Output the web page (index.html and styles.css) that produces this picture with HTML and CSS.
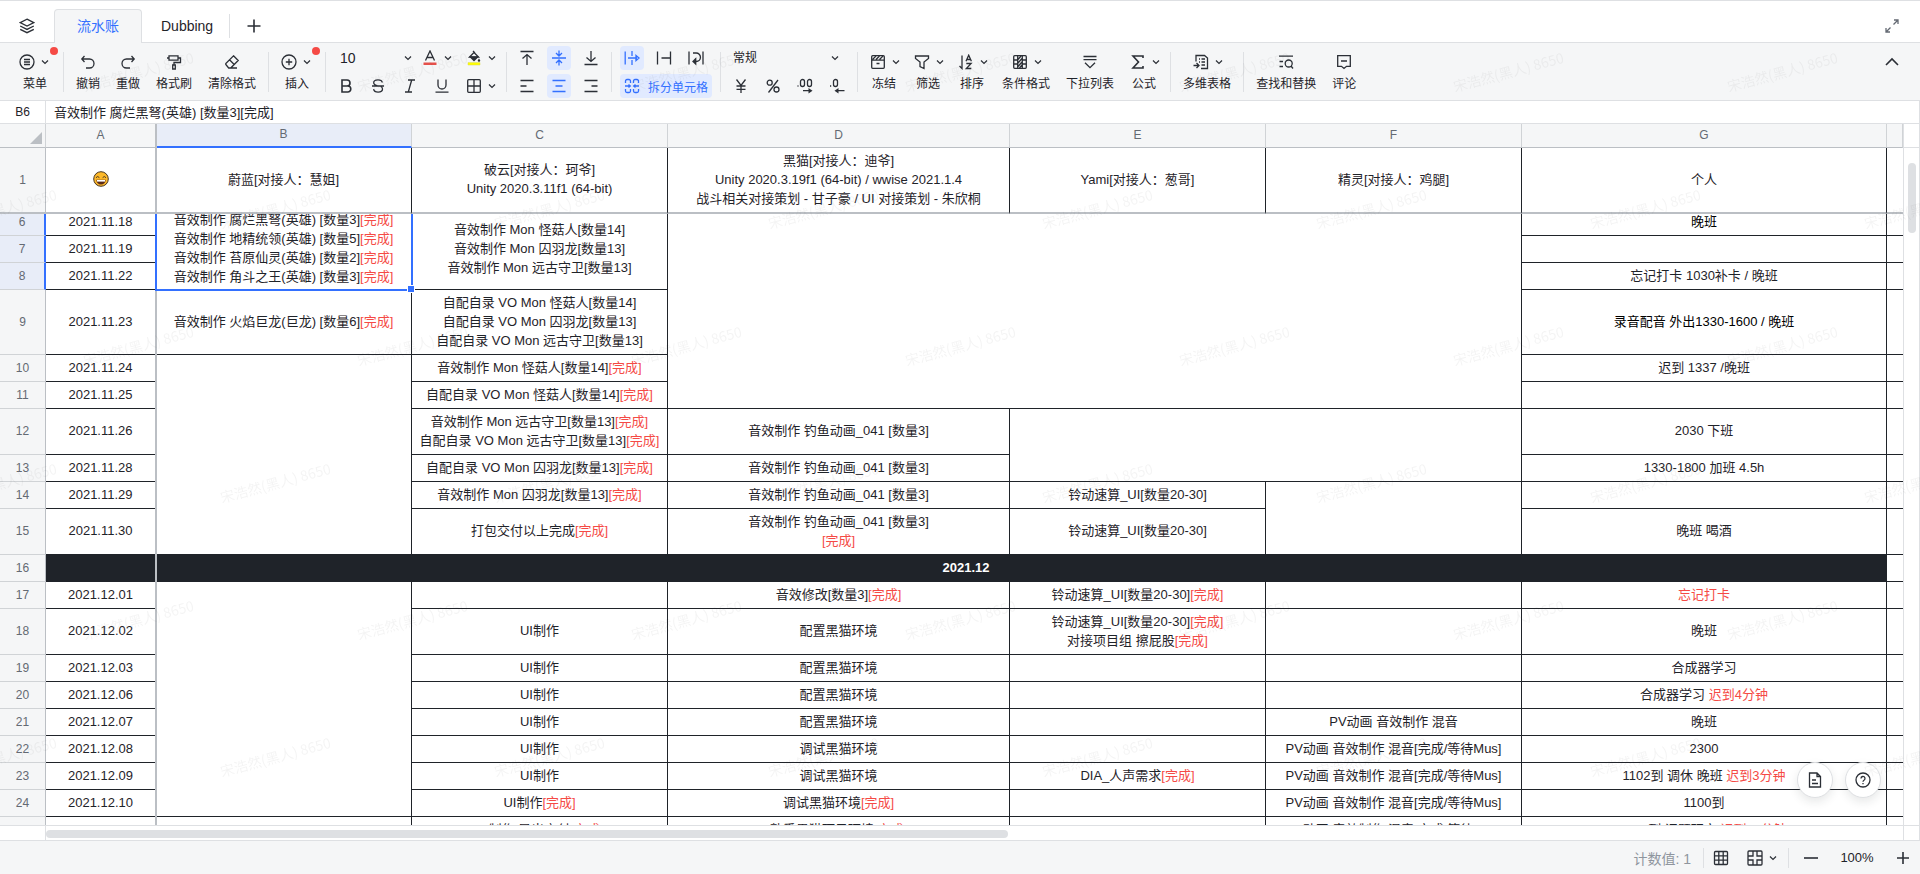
FILE: index.html
```html
<!DOCTYPE html>
<html lang="zh-CN">
<head>
<meta charset="utf-8">
<title>流水账</title>
<link rel="stylesheet" href="styles.css">
</head>
<body>
<svg class="defs" aria-hidden="true">
  <symbol id="chev" viewBox="0 0 12 12"><path d="M3 4.5l3 3 3-3"/></symbol>
</svg>
<div class="app">
  <nav class="tabs">
    <button class="icon-btn tabs-all" aria-label="全部工作表"><svg class="ico" viewBox="0 0 16 16"><path d="M8 1.2l6.8 3.4L8 8 1.200 4.600zM1.200 8L8 11.400 14.800 8M1.200 11.300L8 14.700l6.800-3.400"/></svg></button>
    <button class="tab tab--on">流水账</button>
    <button class="tab">Dubbing</button>
    <span class="tabs-sep"></span>
    <button class="icon-btn tabs-add" aria-label="新建工作表"><svg class="ico ico--bold" viewBox="0 0 16 16"><path d="M8 1.500v13M1.500 8h13"/></svg></button>
    <button class="icon-btn tabs-full" aria-label="全屏"><svg class="ico ico--grey" viewBox="0 0 16 16"><path d="M9.500 6.500l4-4M10 2h4v4M6.500 9.500l-4 4M2 10v4h4"/></svg></button>
  </nav>

  <header class="toolbar">
    <button class="tool tool--wide"><span class="tool-icons"><svg class="ico" viewBox="0 0 16 16"><circle cx="8" cy="8" r="7"/><path d="M5 5.500h6M5 8h6M5 10.500h6"/></svg><svg class="chev"><use href="#chev"/></svg></span><span>菜单</span><i class="dot"></i></button>
    <span class="sep"></span>
    <button class="tool"><svg class="ico" viewBox="0 0 16 16"><path d="M4.500 2L1.800 5l2.700 3M2 5h7.500a4.500 4.500 0 0 1 0 9H6"/></svg><span>撤销</span></button>
    <button class="tool"><svg class="ico" viewBox="0 0 16 16"><path d="M11.500 2l2.700 3-2.700 3M14 5H6.500a4.500 4.500 0 0 0 0 9H10"/></svg><span>重做</span></button>
    <button class="tool"><svg class="ico" viewBox="0 0 16 16"><path d="M3 1.800h9v4.400H3zM1 4h2M12 4h2.500v4.500H8V11M6.700 11h2.600v4H6.700z"/></svg><span>格式刷</span></button>
    <button class="tool"><svg class="ico" viewBox="0 0 16 16"><path d="M9.500 1.800l4.700 4.700-7.500 7.500h-2L1.800 10.500v-1zM5.500 5.800l4.700 4.700M6.500 14H13"/></svg><span>清除格式</span></button>
    <span class="sep"></span>
    <button class="tool tool--wide"><span class="tool-icons"><svg class="ico" viewBox="0 0 16 16"><circle cx="8" cy="8" r="7"/><path d="M8 4.800v6.400M4.800 8h6.400"/></svg><svg class="chev"><use href="#chev"/></svg></span><span>插入</span><i class="dot"></i></button>
    <span class="sep"></span>

    <div class="stack">
      <div class="line">
        <span class="pick pick--size"><select aria-label="字号"><option>10</option></select><svg class="chev"><use href="#chev"/></svg></span>
        <button class="sq sq--drop" aria-label="字体颜色"><svg class="ico" viewBox="0 0 16 16"><path d="M3.500 10.500L8 1l4.500 9.500M5.200 7.500h5.600"/><path class="fill-red" d="M1.500 12.500h13v2.500h-13z"/></svg><svg class="chev"><use href="#chev"/></svg></button>
        <button class="sq sq--drop" aria-label="填充颜色"><svg class="ico" viewBox="0 0 16 16"><path d="M7 1l2 2M8 2.500l4.500 4.500H3.500z"/><path class="fill-dark" d="M3 6.500h10l-5 5zM13 8.500l1.300 2a1.300 1.300 0 1 1-2.600 0z"/><path class="fill-yellow" d="M2 12.600h12v2.400H2z"/></svg><svg class="chev"><use href="#chev"/></svg></button>
      </div>
      <div class="line">
        <button class="sq" aria-label="加粗"><svg class="ico ico--bold" viewBox="0 0 16 16"><path d="M4 2h5a3 3 0 0 1 0 6H4zM4 8h5.800a3 3 0 0 1 0 6H4z"/></svg></button>
        <button class="sq" aria-label="删除线"><svg class="ico" viewBox="0 0 16 16"><path d="M12.300 4.500C12 2.800 10.500 1.800 8 1.800S3.700 3 3.700 4.700C3.700 6.500 5.500 7.200 8 8M2 8h12M10.800 8.500c1.200.6 1.700 1.500 1.700 2.600 0 1.900-1.700 3.100-4.400 3.100-2.600 0-4.200-1.100-4.500-3"/></svg></button>
        <button class="sq" aria-label="斜体"><svg class="ico" viewBox="0 0 16 16"><path d="M6 2h7M3 14h7M9.700 2L6.300 14"/></svg></button>
        <button class="sq" aria-label="下划线"><svg class="ico" viewBox="0 0 16 16"><path d="M4 1.500V7a4 4 0 0 0 8 0V1.500M1.500 14.200h13"/></svg></button>
        <button class="sq sq--drop" aria-label="边框"><svg class="ico" viewBox="0 0 16 16"><rect x="1.700" y="1.700" width="12.600" height="12.600" rx="1"/><path d="M8 2v12M2 8h12"/></svg><svg class="chev"><use href="#chev"/></svg></button>
      </div>
    </div>
    <span class="sep"></span>
    <div class="stack">
      <div class="line">
        <button class="sq" aria-label="顶部对齐"><svg class="ico" viewBox="0 0 16 16"><path d="M1.500 1.500h13M8 15V5M3.500 8.500L8 4.500l4.500 4"/></svg></button>
        <button class="sq sq--on" aria-label="垂直居中"><svg class="ico" viewBox="0 0 16 16"><path d="M1 8h14M8 .500v5M5 3l3 3 3-3M8 15.500v-5M5 13l3-3 3 3"/></svg></button>
        <button class="sq" aria-label="底部对齐"><svg class="ico" viewBox="0 0 16 16"><path d="M1.500 14.500h13M8 1v10M3.500 7.500L8 11.500l4.500-4"/></svg></button>
      </div>
      <div class="line">
        <button class="sq" aria-label="左对齐"><svg class="ico" viewBox="0 0 16 16"><path d="M1.500 2.500h13M1.500 8h6M1.500 13.500h13"/></svg></button>
        <button class="sq sq--on" aria-label="水平居中"><svg class="ico" viewBox="0 0 16 16"><path d="M1.500 2.500h13M4.500 8h7M1.500 13.500h13"/></svg></button>
        <button class="sq" aria-label="右对齐"><svg class="ico" viewBox="0 0 16 16"><path d="M1.500 2.500h13M8.500 8h6M1.500 13.500h13"/></svg></button>
      </div>
    </div>
    <span class="sep"></span>
    <div class="stack">
      <div class="line">
        <button class="sq sq--on" aria-label="溢出"><svg class="ico" viewBox="0 0 16 16"><path d="M1.200 1.500v13M8 1v5M8 10v5M4 8h9M12 5.500l3 2.500-3 2.500z"/></svg></button>
        <button class="sq" aria-label="截断"><svg class="ico" viewBox="0 0 16 16"><path d="M1.500 1.500v13M14.500 1.500v13M5.500 8h9"/></svg></button>
        <button class="sq" aria-label="自动换行"><svg class="ico" viewBox="0 0 16 16"><path d="M1 1.500v13M15 1.500v13M5 3h3.200a4 4 0 0 1 0 8.500H6M7.700 8.800L5 11.500l2.700 2.500z"/></svg></button>
      </div>
      <div class="line">
        <button class="sq sq--on sq--text"><svg class="ico" viewBox="0 0 16 16"><path d="M6.500 5V3a1.500 1.500 0 0 0-1.500-1.500H3A1.500 1.500 0 0 0 1.500 3v2M1.500 11v2A1.500 1.500 0 0 0 3 14.500h2A1.500 1.500 0 0 0 6.500 13v-2M14.500 5V3A1.500 1.500 0 0 0 13 1.500h-2A1.500 1.500 0 0 0 9.500 3v2M9.500 11v2a1.500 1.500 0 0 0 1.500 1.500h2a1.500 1.500 0 0 0 1.500-1.500v-2M1 8h5M10 8h5M4.500 6.500L6.300 8 4.500 9.500M11.500 6.500L9.700 8l1.800 1.500"/></svg><span>拆分单元格</span></button>
      </div>
    </div>
    <span class="sep"></span>
    <div class="stack">
      <div class="line">
        <span class="pick pick--format"><select aria-label="数字格式"><option>常规</option></select><svg class="chev"><use href="#chev"/></svg></span>
      </div>
      <div class="line">
        <button class="sq" aria-label="货币"><svg class="ico" viewBox="0 0 16 16"><path d="M3.500 1.500L8 7.500l4.500-6M8 7.500v7.500M3.500 8h9M3.500 11.300h9"/></svg></button>
        <button class="sq" aria-label="百分比"><svg class="ico" viewBox="0 0 16 16"><circle cx="4.700" cy="4.700" r="2.500"/><circle cx="11.500" cy="11.500" r="2.500"/><path d="M13 2L3.500 14.500"/></svg></button>
        <button class="sq" aria-label="增加小数位"><svg class="ico" viewBox="0 0 16 16"><rect x="3.500" y="1.500" width="4" height="7" rx="2"/><rect x="10.500" y="1.500" width="4" height="7" rx="2"/><path d="M.500 8h1M6 12.700h7"/><path class="fill-dark" d="M11.500 10l4 2.700-4 2.700z"/></svg></button>
        <button class="sq" aria-label="减少小数位"><svg class="ico" viewBox="0 0 16 16"><rect x="4.500" y="1.500" width="4" height="7" rx="2"/><path d="M1 8h1.200M8 12.700h7.500"/><path class="fill-dark" d="M9.500 10l-4 2.700 4 2.700z"/></svg></button>
      </div>
    </div>
    <span class="sep"></span>

    <button class="tool tool--drop"><span class="tool-icons"><svg class="ico" viewBox="0 0 16 16"><rect x="1.700" y="1.700" width="12.600" height="12.600" rx="1"/><path d="M2 6.200h12M6.500 9.500h3M2.500 5.500l3.500-3.500M6 5.500l3.500-3.500M9.500 5.500l3.500-3.500"/></svg><svg class="chev"><use href="#chev"/></svg></span><span>冻结</span></button>
    <button class="tool tool--drop"><span class="tool-icons"><svg class="ico" viewBox="0 0 16 16"><path d="M1.500 2h13v2.500L10 8v6.500L6 12.500V8L1.500 4.500z"/></svg><svg class="chev"><use href="#chev"/></svg></span><span>筛选</span></button>
    <button class="tool tool--drop"><span class="tool-icons"><svg class="ico" viewBox="0 0 16 16"><path d="M4 1.500v13L1.500 12M8 7.200l2.700-6 2.700 6M8.900 5.500h3.600M8.300 9.500h4.800l-4.800 5h5"/></svg><svg class="chev"><use href="#chev"/></svg></span><span>排序</span></button>
    <button class="tool tool--drop"><span class="tool-icons"><svg class="ico" viewBox="0 0 16 16"><rect x="1.700" y="1.700" width="12.600" height="12.600" rx="1"/><path d="M5.700 2v12M10.300 2v12M2 6h3.500M2 10h3.500M10.500 6H14M10.500 10H14M6 5.500L9 2M6 9l4-4.500M6 12.500L10 8M7.500 14l2.500-3"/></svg><svg class="chev"><use href="#chev"/></svg></span><span>条件格式</span></button>
    <button class="tool"><svg class="ico" viewBox="0 0 16 16"><path d="M1.500 2.500h13M1.500 5.700h13M3 8.700l5 5 5-5"/></svg><span>下拉列表</span></button>
    <button class="tool tool--drop"><span class="tool-icons"><svg class="ico ico--bold" viewBox="0 0 16 16"><path d="M13 4V2H3l5.500 6L3 14h10v-2"/></svg><svg class="chev"><use href="#chev"/></svg></span><span>公式</span></button>
    <span class="sep"></span>
    <button class="tool tool--drop"><span class="tool-icons"><svg class="ico" viewBox="0 0 16 16"><path d="M3 7.500v-6h8.500L14.500 4v10.500H8M6 5h1M8.500 5H12M6 8h1M8.500 8H12M8.500 11H12M.500 11.500h5M3.500 9l2.500 2.500L3.500 14"/></svg><svg class="chev"><use href="#chev"/></svg></span><span>多维表格</span></button>
    <span class="sep"></span>
    <button class="tool"><svg class="ico" viewBox="0 0 16 16"><path d="M1 2.200h14M1.500 7.500H5M1.500 12.500H5M13 12l2 2.500"/><circle cx="10.700" cy="9.500" r="3.500"/></svg><span>查找和替换</span></button>
    <button class="tool"><svg class="ico" viewBox="0 0 16 16"><path d="M1.700 1.700h12.600v10.600H10.500l-2.500 2.200-2.500-2.200H1.700zM5 7h6"/></svg><span>评论</span></button>
    <button class="icon-btn toolbar-fold" aria-label="收起工具栏"><svg class="ico ico--bold" viewBox="0 0 16 16"><path d="M2 11l6-6 6 6"/></svg></button>
  </header>

  <div class="formula">
    <span class="formula-name">B6</span>
    <textarea class="formula-text" aria-label="编辑栏" spellcheck="false">音效制作 腐烂黑弩(英雄) [数量3][完成]
音效制作 地精统领(英雄) [数量5][完成]</textarea>
  </div>

  <main class="sheet">
    <div class="grid">
      <table class="cells cells--head">
        <colgroup><col class="c-n"><col class="c-a"><col class="c-m"><col class="c-m"><col class="c-d"><col class="c-m"><col class="c-m"><col class="c-g"><col></colgroup>
        <thead><tr><th class="corner"><svg viewBox="0 0 12 12"><path d="M12 0v12H0z"/></svg></th><th>A</th><th class="hit">B</th><th>C</th><th>D</th><th>E</th><th>F</th><th>G</th><th></th></tr></thead>
        <tbody><tr class="r0"><th scope="row">1</th>
          <td><svg class="smile" role="img" aria-label="笑脸" viewBox="0 0 16 16"><circle cx="8" cy="8" r="7.300" fill="#fdb92a" stroke="#4a3722"/><path d="M3 6.700q1.700-2.400 3.400 0M9.600 6.700q1.700-2.400 3.400 0" fill="none" stroke="#4a3722"/><path d="M3.300 8.700h9.400q-.5 4.800-4.700 4.800t-4.700-4.800z" fill="#5b2b18"/><path d="M4 9h8v1.600H4z" fill="#fff"/></svg></td>
          <td>蔚蓝[对接人：慧姐]</td><td>破云[对接人：珂爷]<br>Unity 2020.3.11f1 (64-bit)</td><td>黑猫[对接人：迪爷]<br>Unity 2020.3.19f1 (64-bit) / wwise 2021.1.4<br>战斗相关对接策划 - 甘子豪 / UI 对接策划 - 朱欣桐</td><td>Yami[对接人：葱哥]</td><td>精灵[对接人：鸡腿]</td><td>个人</td><td></td></tr></tbody>
      </table>
      <div class="view">
        <table class="cells cells--body">
          <colgroup><col class="c-n"><col class="c-a"><col class="c-m"><col class="c-m"><col class="c-d"><col class="c-m"><col class="c-m"><col class="c-g"><col></colgroup>
          <tbody>
          <tr class="r1"><th scope="row" class="hit">6</th><td>2021.11.18</td><td rowspan="3">音效制作 腐烂黑弩(英雄) [数量3]<em>[完成]</em><br>音效制作 地精统领(英雄) [数量5]<em>[完成]</em><br>音效制作 苔原仙灵(英雄) [数量2]<em>[完成]</em><br>音效制作 角斗之王(英雄) [数量3]<em>[完成]</em></td><td rowspan="3">音效制作 Mon 怪菇人[数量14]<br>音效制作 Mon 囚羽龙[数量13]<br>音效制作 Mon 远古守卫[数量13]</td><td colspan="3" rowspan="6"></td><td class="ink">晚班</td><td></td></tr>
          <tr class="r1"><th scope="row" class="hit">7</th><td>2021.11.19</td><td></td><td></td></tr>
          <tr class="r1"><th scope="row" class="hit">8</th><td>2021.11.22</td><td>忘记打卡 1030补卡 / 晚班</td><td></td></tr>
          <tr class="r3"><th scope="row">9</th><td>2021.11.23</td><td>音效制作 火焰巨龙(巨龙) [数量6]<em>[完成]</em></td><td>自配自录 VO Mon 怪菇人[数量14]<br>自配自录 VO Mon 囚羽龙[数量13]<br>自配自录 VO Mon 远古守卫[数量13]</td><td class="ink">录音配音 外出1330-1600 / 晚班</td><td></td></tr>
          <tr class="r1"><th scope="row">10</th><td>2021.11.24</td><td rowspan="6"></td><td>音效制作 Mon 怪菇人[数量14]<em>[完成]</em></td><td>迟到 1337 /晚班</td><td></td></tr>
          <tr class="r1"><th scope="row">11</th><td>2021.11.25</td><td>自配自录 VO Mon 怪菇人[数量14]<em>[完成]</em></td><td></td><td></td></tr>
          <tr class="r2"><th scope="row">12</th><td>2021.11.26</td><td>音效制作 Mon 远古守卫[数量13]<em>[完成]</em><br>自配自录 VO Mon 远古守卫[数量13]<em>[完成]</em></td><td>音效制作 钓鱼动画_041 [数量3]</td><td colspan="2" rowspan="2"></td><td>2030 下班</td><td></td></tr>
          <tr class="r1"><th scope="row">13</th><td>2021.11.28</td><td>自配自录 VO Mon 囚羽龙[数量13]<em>[完成]</em></td><td>音效制作 钓鱼动画_041 [数量3]</td><td>1330-1800 加班 4.5h</td><td></td></tr>
          <tr class="r1"><th scope="row">14</th><td>2021.11.29</td><td>音效制作 Mon 囚羽龙[数量13]<em>[完成]</em></td><td>音效制作 钓鱼动画_041 [数量3]</td><td>铃动速算_UI[数量20-30]</td><td rowspan="2"></td><td></td><td></td></tr>
          <tr class="r2"><th scope="row">15</th><td>2021.11.30</td><td>打包交付以上完成<em>[完成]</em></td><td>音效制作 钓鱼动画_041 [数量3]<br><em>[完成]</em></td><td>铃动速算_UI[数量20-30]</td><td>晚班 喝酒</td><td></td></tr>
          <tr class="r1"><th scope="row">16</th><td colspan="7" class="month">2021.12</td><td></td></tr>
          <tr class="r1"><th scope="row">17</th><td>2021.12.01</td><td rowspan="8"></td><td></td><td>音效修改[数量3]<em>[完成]</em></td><td>铃动速算_UI[数量20-30]<em>[完成]</em></td><td></td><td><em>忘记打卡</em></td><td></td></tr>
          <tr class="r2"><th scope="row">18</th><td>2021.12.02</td><td>UI制作</td><td>配置黑猫环境</td><td>铃动速算_UI[数量20-30]<em>[完成]</em><br>对接项目组 擦屁股<em>[完成]</em></td><td></td><td>晚班</td><td></td></tr>
          <tr class="r1"><th scope="row">19</th><td>2021.12.03</td><td>UI制作</td><td>配置黑猫环境</td><td></td><td></td><td>合成器学习</td><td></td></tr>
          <tr class="r1"><th scope="row">20</th><td>2021.12.06</td><td>UI制作</td><td>配置黑猫环境</td><td></td><td></td><td>合成器学习 <em>迟到4分钟</em></td><td></td></tr>
          <tr class="r1"><th scope="row">21</th><td>2021.12.07</td><td>UI制作</td><td>配置黑猫环境</td><td></td><td>PV动画 音效制作 混音</td><td>晚班</td><td></td></tr>
          <tr class="r1"><th scope="row">22</th><td>2021.12.08</td><td>UI制作</td><td>调试黑猫环境</td><td></td><td>PV动画 音效制作 混音[完成/等待Mus]</td><td>2300</td><td></td></tr>
          <tr class="r1"><th scope="row">23</th><td>2021.12.09</td><td>UI制作</td><td>调试黑猫环境</td><td>DIA_人声需求<em>[完成]</em></td><td>PV动画 音效制作 混音[完成/等待Mus]</td><td>1102到 调休 晚班 <em>迟到3分钟</em></td><td></td></tr>
          <tr class="r1"><th scope="row">24</th><td>2021.12.10</td><td>UI制作<em>[完成]</em></td><td>调试黑猫环境<em>[完成]</em></td><td></td><td>PV动画 音效制作 混音[完成/等待Mus]</td><td>1100到</td><td></td></tr>
          <tr class="r1"><th scope="row"></th><td>2021.12.13</td><td></td><td>UI制作 导出交付<em>[完成]</em></td><td>熟悉黑猫项目环境<em>[完成]</em></td><td></td><td>PV动画 音效制作 混音[完成/等待Mus]</td><td>1115到 调题研究 <em>迟到36分钟</em></td><td></td></tr>
          </tbody>
        </table>
      </div>
      <div class="freeze"></div>
      <div class="select"></div>
    </div>
    <div class="vbar"><div class="vbar-top"></div><div class="vbar-thumb"></div></div>
    <div class="hbar"><div class="hbar-thumb"></div></div>
    <div class="hbar-end"></div>
  </main>

  <footer class="status">
    <span class="status-count">计数值: 1</span>
    <span class="status-sep"></span>
    <button class="icon-btn" aria-label="网格线"><svg class="ico" viewBox="0 0 16 16"><rect x="1.500" y="1.500" width="13" height="13" rx="1"/><path d="M5.800 2v12M10.200 2v12M2 5.800h12M2 10.200h12"/></svg></button>
    <button class="icon-btn status-view" aria-label="视图"><svg class="ico" viewBox="0 0 16 16"><rect x="1" y="1" width="14" height="14" rx="1"/><path d="M6 1v5H1M10 1v5h5M6 15v-5H1M10 15v-5h5"/></svg><svg class="chev"><use href="#chev"/></svg></button>
    <span class="status-sep"></span>
    <button class="icon-btn status-minus" aria-label="缩小"><svg class="ico ico--bold" viewBox="0 0 16 16"><path d="M1 8h14"/></svg></button>
    <span class="status-zoom">100%</span>
    <button class="icon-btn" aria-label="放大"><svg class="ico ico--bold" viewBox="0 0 16 16"><path d="M8 2v12M2 8h12"/></svg></button>
  </footer>

  <div class="float">
    <button class="round" aria-label="文档"><svg class="ico" viewBox="0 0 16 16"><path d="M2.500 1h7.500l3.500 3.500V15h-11zM10 1v3.500h3.500M5 8h4M5 11.500h6"/></svg></button>
    <button class="round" aria-label="帮助"><svg class="ico" viewBox="0 0 16 16"><circle cx="8" cy="8" r="7"/><path d="M6 6.500a2 2 0 1 1 3 1.700c-.7.400-1 .8-1 1.500M8 11v1.300"/></svg></button>
  </div>
  <svg class="mark" aria-hidden="true">
    <defs><pattern id="mark" width="274" height="274" patternUnits="userSpaceOnUse">
      <text transform="translate(85 92) rotate(-15)">宋浩然(黑人) 8650</text>
      <text transform="translate(222 229) rotate(-15)">宋浩然(黑人) 8650</text>
      <text transform="translate(-52 229) rotate(-15)">宋浩然(黑人) 8650</text>
    </pattern></defs>
    <rect width="100%" height="100%" fill="url(#mark)"/>
  </svg>
</div>
</body>
</html>
```

FILE: styles.css
```css
* { box-sizing: border-box; }
body { margin: 0; }
body, button, select, textarea {
  font-family: "Liberation Sans", "Noto Sans CJK SC", sans-serif;
  font-size: 12px;
  color: #1f2329;
}
button { border: 0; padding: 0; background: none; cursor: pointer; }
.defs { position: absolute; width: 0; height: 0; }

.app {
  position: relative;
  display: flex;
  flex-direction: column;
  height: 100vh;
  overflow: hidden;
  background: #fff;
}

/* icons */
.ico { display: block; flex: none; width: 16px; height: 16px; fill: none; stroke: #2b2f36; stroke-width: 1.3; }
.ico--bold { stroke-width: 1.6; }
.ico--grey { stroke: #646a73; }
.chev { display: block; flex: none; width: 12px; height: 12px; fill: none; stroke: #2b2f36; stroke-width: 1.2; }
.fill-red { fill: #e5504a; stroke: none; }
.fill-dark { fill: #2b2f36; stroke: none; }
.fill-yellow { fill: #ffff00; stroke: #d9d94a; stroke-width: 0.5; }
.icon-btn { display: flex; align-items: center; justify-content: center; width: 24px; height: 24px; }

/* sheet tabs */
.tabs {
  display: flex;
  flex: none;
  align-items: center;
  height: 43px;
  padding: 8px 16px 0 15px;
  border-top: 1px solid #dee0e3;
  border-bottom: 1px solid #dee0e3;
}
.tabs-all { margin-right: 15px; }
.tab { align-self: stretch; padding: 0 16px 0 19px; font-size: 14px; }
.tab--on {
  width: 88px;
  padding: 0 0 4px;
  margin-bottom: -1px;
  border: 1px solid #dee0e3;
  border-bottom: 0;
  border-radius: 4px 4px 0 0;
  background: #f5f6f7;
  color: #3370ff;
}
.tabs-sep { width: 1px; height: 24px; margin-right: 12px; background: #dee0e3; }
.tabs-full { margin-left: auto; }

/* toolbar */
.toolbar {
  display: flex;
  flex: none;
  height: 58px;
  padding: 0 16px 0 11px;
  border-bottom: 1px solid #dee0e3;
  background: #f5f6f7;
  white-space: nowrap;
}
.sep { flex: none; width: 1px; height: 40px; margin: 9px 4px 0; background: #dee0e3; }
.tool {
  position: relative;
  display: flex;
  flex: none;
  flex-direction: column;
  align-items: center;
  gap: 5px;
  padding: 11px 8px 0;
  line-height: 18px;
}
.tool--wide { width: 48px; }
.tool--drop { padding: 11px 4px 0; }
.tool--drop > span:last-child { padding: 0 4px; }
.tool-icons { display: flex; align-items: center; gap: 4px; }
.tool--drop .tool-icons { padding-left: 4px; }
.dot { position: absolute; top: 4px; right: 1px; width: 8px; height: 8px; border-radius: 50%; background: #f54a45; }
.stack { display: flex; flex: none; flex-direction: column; gap: 4px; padding: 3px 4px; }
.line { display: flex; gap: 8px; height: 24px; }
.sq { display: flex; align-items: center; justify-content: center; width: 24px; height: 24px; border-radius: 4px; }
.sq--drop { width: 36px; padding-left: 4px; gap: 4px; }
.sq--on { background: #e1eaff; color: #3370ff; }
.sq--on .ico { stroke: #3370ff; }
.sq--text { width: auto; gap: 8px; padding: 0 4px; }
.pick { position: relative; display: flex; align-items: center; }
.pick select { width: 100%; height: 24px; border: 0; background: none; appearance: none; padding: 0 4px; }
.pick .chev { position: absolute; right: -4px; pointer-events: none; }
.pick--size { width: 76px; }
.pick--size select { font-size: 14px; padding: 0 6px; }
.pick--format { width: 120px; }
.pick--format .chev { right: 8px; }
.toolbar-fold { margin: 7px 0 0 auto; }

/* formula bar */
.formula { display: flex; flex: none; height: 23px; border-bottom: 1px solid #dee0e3; border-right: 1px solid #dee0e3; }
.formula-name { flex: none; width: 46px; border-right: 1px solid #dee0e3; line-height: 22px; text-align: center; }
.formula-text {
  flex: 1;
  height: 22px;
  padding: 3px 8px 0;
  border: 0;
  outline: 0;
  resize: none;
  overflow: hidden;
  font-size: 13px;
  line-height: 18px;
}

/* sheet */
.sheet { display: grid; flex: 1; grid-template: minmax(0, 1fr) 16px / minmax(0, 1fr) 17px; min-height: 0; }
.grid { position: relative; display: flex; flex-direction: column; min-height: 0; overflow: hidden; }
.view { flex: 1; min-height: 0; overflow: hidden; }
.cells { width: 100%; table-layout: fixed; border-collapse: separate; border-spacing: 0; font-size: 13px; line-height: 19px; }
.cells--body { margin-top: -5px; }
.c-n { width: 46px; }
.c-a { width: 110px; }
.c-m { width: 256px; }
.c-d { width: 342px; }
.c-g { width: 365px; }
.cells th {
  padding: 0;
  border-right: 1px solid #bbbfc4;
  border-bottom: 1px solid #d0d3d6;
  background: #f5f6f7;
  color: #646a73;
  font-size: 12px;
  font-weight: 400;
}
.cells thead th { height: 24px; padding-bottom: 2px; border-right-color: #d0d3d6; border-bottom-color: #bbbfc4; line-height: 16px; }
.cells td {
  padding: 0 0 2px;
  border-right: 1px solid #1f2329;
  border-bottom: 1px solid #1f2329;
  text-align: center;
  white-space: nowrap;
}
.cells td:last-child { border-right: 0; }
.cells thead .hit { border-bottom: 2px solid #3370ff; background: #e8edf8; }
.cells tbody .hit { border-right: 2px solid #3370ff; background: #e8edf8; }
.cells em { color: #f54a45; font-style: normal; }
.cells .ink { color: #000; }
.cells .month { background: #1f2329; color: #fff; font-weight: 700; }
.cells--head td, .cells--head tbody th { border-bottom: 2px solid #bbbfc4; }
.r0 { height: 66px; }
.r1 { height: 27px; }
.r2 { height: 46px; }
.r3 { height: 65px; }
.corner svg { display: block; width: 12px; height: 12px; margin: 6px 3px 0 auto; fill: #bbbfc4; }
.smile { display: block; width: 16px; height: 16px; margin: 0 auto; }

/* frozen column edge and the selected range lie over the cells */
.freeze { position: absolute; top: 0; bottom: 0; left: 155px; width: 2px; background: #bbbfc4; }
.select { position: absolute; top: 90px; left: 155px; width: 258px; height: 77px; border: 2px solid #3370ff; border-top: 0; }
.select::after {
  content: "";
  position: absolute;
  right: -4px;
  bottom: -4px;
  width: 6px;
  height: 6px;
  border: 1px solid #fff;
  background: #3370ff;
}

/* scrollbars */
.vbar { border-left: 1px solid #dee0e3; border-right: 1px solid #dee0e3; }
.vbar-top { height: 24px; border-bottom: 1px solid #dee0e3; }
.vbar-thumb { width: 8px; height: 70px; margin: 15px 0 0 4px; border-radius: 4px; background: #dee0e3; }
.hbar { padding: 4px 0 0 46px; border: 1px solid #dee0e3; border-width: 1px 0; background: linear-gradient(#dee0e3, #dee0e3) 45px 0 / 1px 100% no-repeat; }
.hbar-thumb { width: 51.8%; height: 8px; border-radius: 4px; background: #dee0e3; }
.hbar-end { border: 1px solid #dee0e3; }

/* status bar */
.status { display: flex; flex: none; align-items: center; justify-content: flex-end; height: 33px; padding-right: 5px; background: #f5f6f7; }
.status-count { margin-right: 12px; font-size: 14px; color: #8f959e; }
.status-sep { width: 1px; height: 20px; margin-right: 5px; background: #dee0e3; }
.status-view { width: 32px; gap: 4px; margin: 0 9px 0 14px; }
.status-minus { margin-left: 5px; }
.status-zoom { width: 58px; margin: 0 5px; text-align: center; font-size: 13px; }

/* floating buttons */
.float { position: absolute; right: 39px; bottom: 76px; display: flex; gap: 12px; }
.round {
  display: flex;
  align-items: center;
  justify-content: center;
  width: 36px;
  height: 36px;
  border: 1px solid #dee0e3;
  border-radius: 50%;
  background: #fff;
  box-shadow: 0 4px 10px rgba(31, 35, 41, 0.1);
}

/* watermark */
.mark {
  position: absolute;
  inset: 0;
  width: 100%;
  height: 100%;
  pointer-events: none;
  font: 14px "Noto Sans CJK SC", sans-serif;
}
.mark text { fill: rgba(31, 35, 41, 0.05); }
```
